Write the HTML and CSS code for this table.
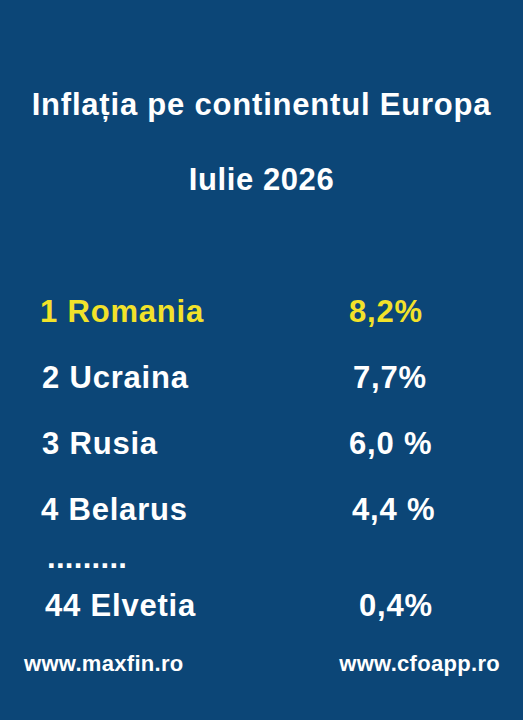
FILE: index.html
```html
<!DOCTYPE html>
<html lang="ro">
<head>
    <meta charset="UTF-8">
    <meta name="viewport" content="width=device-width, initial-scale=1.0">
    <title>Inflația pe continentul Europa</title>
    <link rel="stylesheet" href="styles.css">
</head>
<body>
    <div class="poster">
        <h1 class="title">Inflația pe continentul Europa</h1>
        <h2 class="subtitle">Iulie 2026</h2>

        <div class="ranking">
            <div class="row highlight">
                <span class="country">1 Romania</span>
                <span class="rate">8,2%</span>
            </div>
            <div class="row">
                <span class="country shift-2">2 Ucraina</span>
                <span class="rate shift-4">7,7%</span>
            </div>
            <div class="row">
                <span class="country shift-2">3 Rusia</span>
                <span class="rate">6,0 %</span>
            </div>
            <div class="row">
                <span class="country shift-1">4 Belarus</span>
                <span class="rate shift-3">4,4 %</span>
            </div>
            <div class="dots">.........</div>
            <div class="row">
                <span class="country shift-5">44 Elvetia</span>
                <span class="rate shift-10">0,4%</span>
            </div>
        </div>

        <div class="footer">
            <span>www.maxfin.ro</span>
            <span>www.cfoapp.ro</span>
        </div>
    </div>
</body>
</html>
```

FILE: styles.css
```css
body {
    margin: 0;
    padding: 0;
    background-color: #0c4677;
    font-family: "Liberation Sans", Arial, sans-serif;
    color: #ffffff;
}
.poster {
    width: 523px;
    height: 720px;
    padding-top: 83px;
    box-sizing: border-box;
    overflow: hidden;
}
.title,
.subtitle {
    margin: 0;
    font-size: 31px;
    line-height: 44px;
    font-weight: bold;
    text-align: center;
    letter-spacing: 0.6px;
}
.title {
    letter-spacing: 0.8px;
}
.subtitle {
    margin-top: 31px;
}
.ranking {
    margin-top: 77px;
    padding-left: 40px;
    font-size: 31px;
    font-weight: bold;
    letter-spacing: 0.8px;
}
.row {
    display: grid;
    grid-template-columns: 309px auto;
    line-height: 66px;
}
.highlight {
    color: #f2e22a;
}
.dots {
    line-height: 30px;
    padding-left: 7px;
    letter-spacing: 0.3px;
}
.shift-1 { padding-left: 1px; }
.shift-2 { padding-left: 2px; }
.shift-3 { padding-left: 3px; }
.shift-4 { padding-left: 4px; }
.shift-5 { padding-left: 5px; }
.shift-10 { padding-left: 10px; }

.footer {
    display: flex;
    justify-content: space-between;
    margin-top: 10px;
    padding: 0 23px 0 24px;
    font-size: 22px;
    line-height: 30px;
    font-weight: bold;
    letter-spacing: 0.3px;
}
```
